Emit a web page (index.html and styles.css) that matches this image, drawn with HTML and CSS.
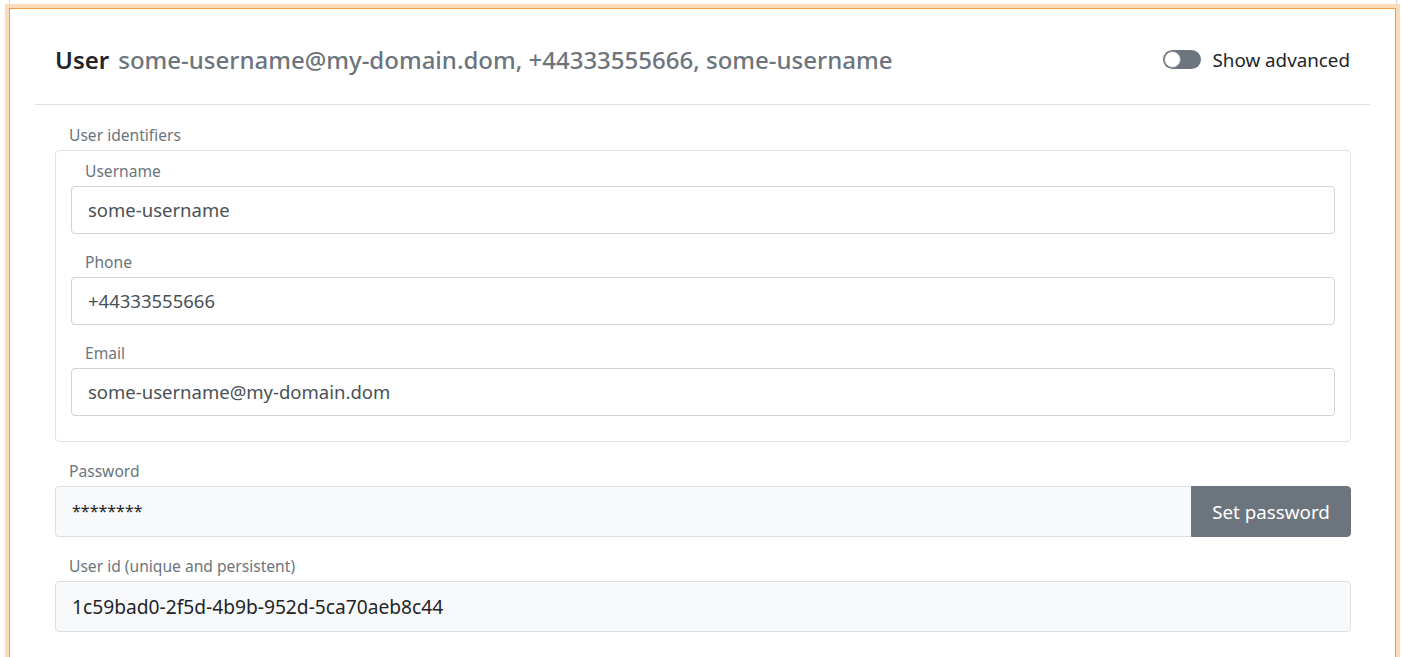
FILE: index.html
```html
<!DOCTYPE html>
<html lang="en">
<head>
<meta charset="utf-8">
<title>User</title>
<link rel="stylesheet" href="styles.css">
</head>
<body>
<div class="topline"></div>
<div class="highlight">
  <div class="card">
    <div class="header">
      <h4 class="title"><span class="title-main">User</span><span class="title-sub">some-username@my-domain.dom, +44333555666, some-username</span></h4>
      <label class="switch">
        <span class="switch-track"><span class="switch-knob"></span></span>
        <span class="switch-label">Show advanced</span>
      </label>
    </div>
    <div class="body">
      <div class="field-label">User identifiers</div>
      <div class="fieldset">
        <div class="group">
          <div class="field-label">Username</div>
          <div class="input">some-username</div>
        </div>
        <div class="group">
          <div class="field-label">Phone</div>
          <div class="input">+44333555666</div>
        </div>
        <div class="group">
          <div class="field-label">Email</div>
          <div class="input">some-username@my-domain.dom</div>
        </div>
      </div>
      <div class="block">
        <div class="field-label">Password</div>
        <div class="input-group">
          <div class="input readonly password">********</div>
          <button class="btn" type="button">Set password</button>
        </div>
      </div>
      <div class="block">
        <div class="field-label">User id (unique and persistent)</div>
        <div class="input readonly tall dark">1c59bad0-2f5d-4b9b-952d-5ca70aeb8c44</div>
      </div>
      <div class="block last">
        <div class="field-label">Account details</div>
      </div>
    </div>
  </div>
</div>
</body>
</html>
```

FILE: styles.css
```css
* { box-sizing: border-box; }
html, body { margin: 0; padding: 0; background: #fff; height: 100%; overflow: hidden; }
body { font-family: "Noto Sans", "Open Sans", sans-serif; color: #212529; }

.topline {
  height: 4px;
  margin-left: 9px;
  width: 1388px;
  border-left: 1px solid #d9d9d9;
  border-right: 1px solid #d9d9d9;
}
.highlight {
  margin-left: 5px;
  width: 1395px;
  background: #fddcb9;
  padding: 4px 4px 0 4px;
  height: 700px;
}
.card {
  background: #fff;
  border: 1px solid #ef9c4c;
  border-bottom: none;
  height: 100%;
}
.header {
  margin: 0 25px;
  height: 96px;
  padding: 6px 20px 0;
  border-bottom: 1px solid #dee2e6;
  display: flex;
  align-items: center;
  justify-content: space-between;
}
.title { margin: 0; font-size: 24px; line-height: 36px; font-weight: 500; display: flex; gap: 9px; }
.title-main { font-weight: 600; color: #212529; }
.title-sub { color: #6c757d; }
.switch { display: flex; align-items: center; gap: 12px; }
.switch-track {
  width: 38px; height: 19px; border-radius: 10px; background: #6c757d;
  display: flex; align-items: center; padding: 1px;
}
.switch-knob { width: 17px; height: 17px; border-radius: 50%; background: #fff; border: 1px solid #8a9096; }
.switch-label { font-size: 18.8px; line-height: 30px; color: #212529; }

.body { padding: 18px 44px 0 45px; }
.field-label { font-size: 15.6px; line-height: 24px; color: #6c757d; padding-left: 14px; margin-bottom: 3px; }
.fieldset {
  margin-top: 1px;
  border: 1px solid #dee2e6;
  border-radius: 4px;
  padding: 8px 15px 9px;
}
.group { margin-bottom: 16px; }
.input {
  border: 1px solid #ced4da;
  border-radius: 4px;
  padding: 8px 16px;
  font-size: 18.5px;
  line-height: 30px;
  color: #495057;
  background: #fff;
  white-space: nowrap;
}
.block { margin-top: 17px; }
.block + .block { margin-top: 17px; }
.block.last { margin-top: 20px; }
.input-group { display: flex; height: 51px; margin-top: 2px; }
.readonly { background: #f8f9fa; border-color: #dcdfe3; }
.input-group .input { flex: 1; border-radius: 4px 0 0 4px; border-right: none; padding: 10px 16px; line-height: 29px; color: #212529; }
.password { font-size: 16px; }
.tall { padding: 10px 16px; line-height: 29px; }
.dark { color: #212529; font-size: 19.2px; }
.btn {
  font-family: inherit;
  font-size: 18.8px;
  color: #fff;
  background: #6c757d;
  border: 1px solid #6c757d;
  border-radius: 0 4px 4px 0;
  padding: 0;
  width: 160px;
  white-space: nowrap;
}
```
